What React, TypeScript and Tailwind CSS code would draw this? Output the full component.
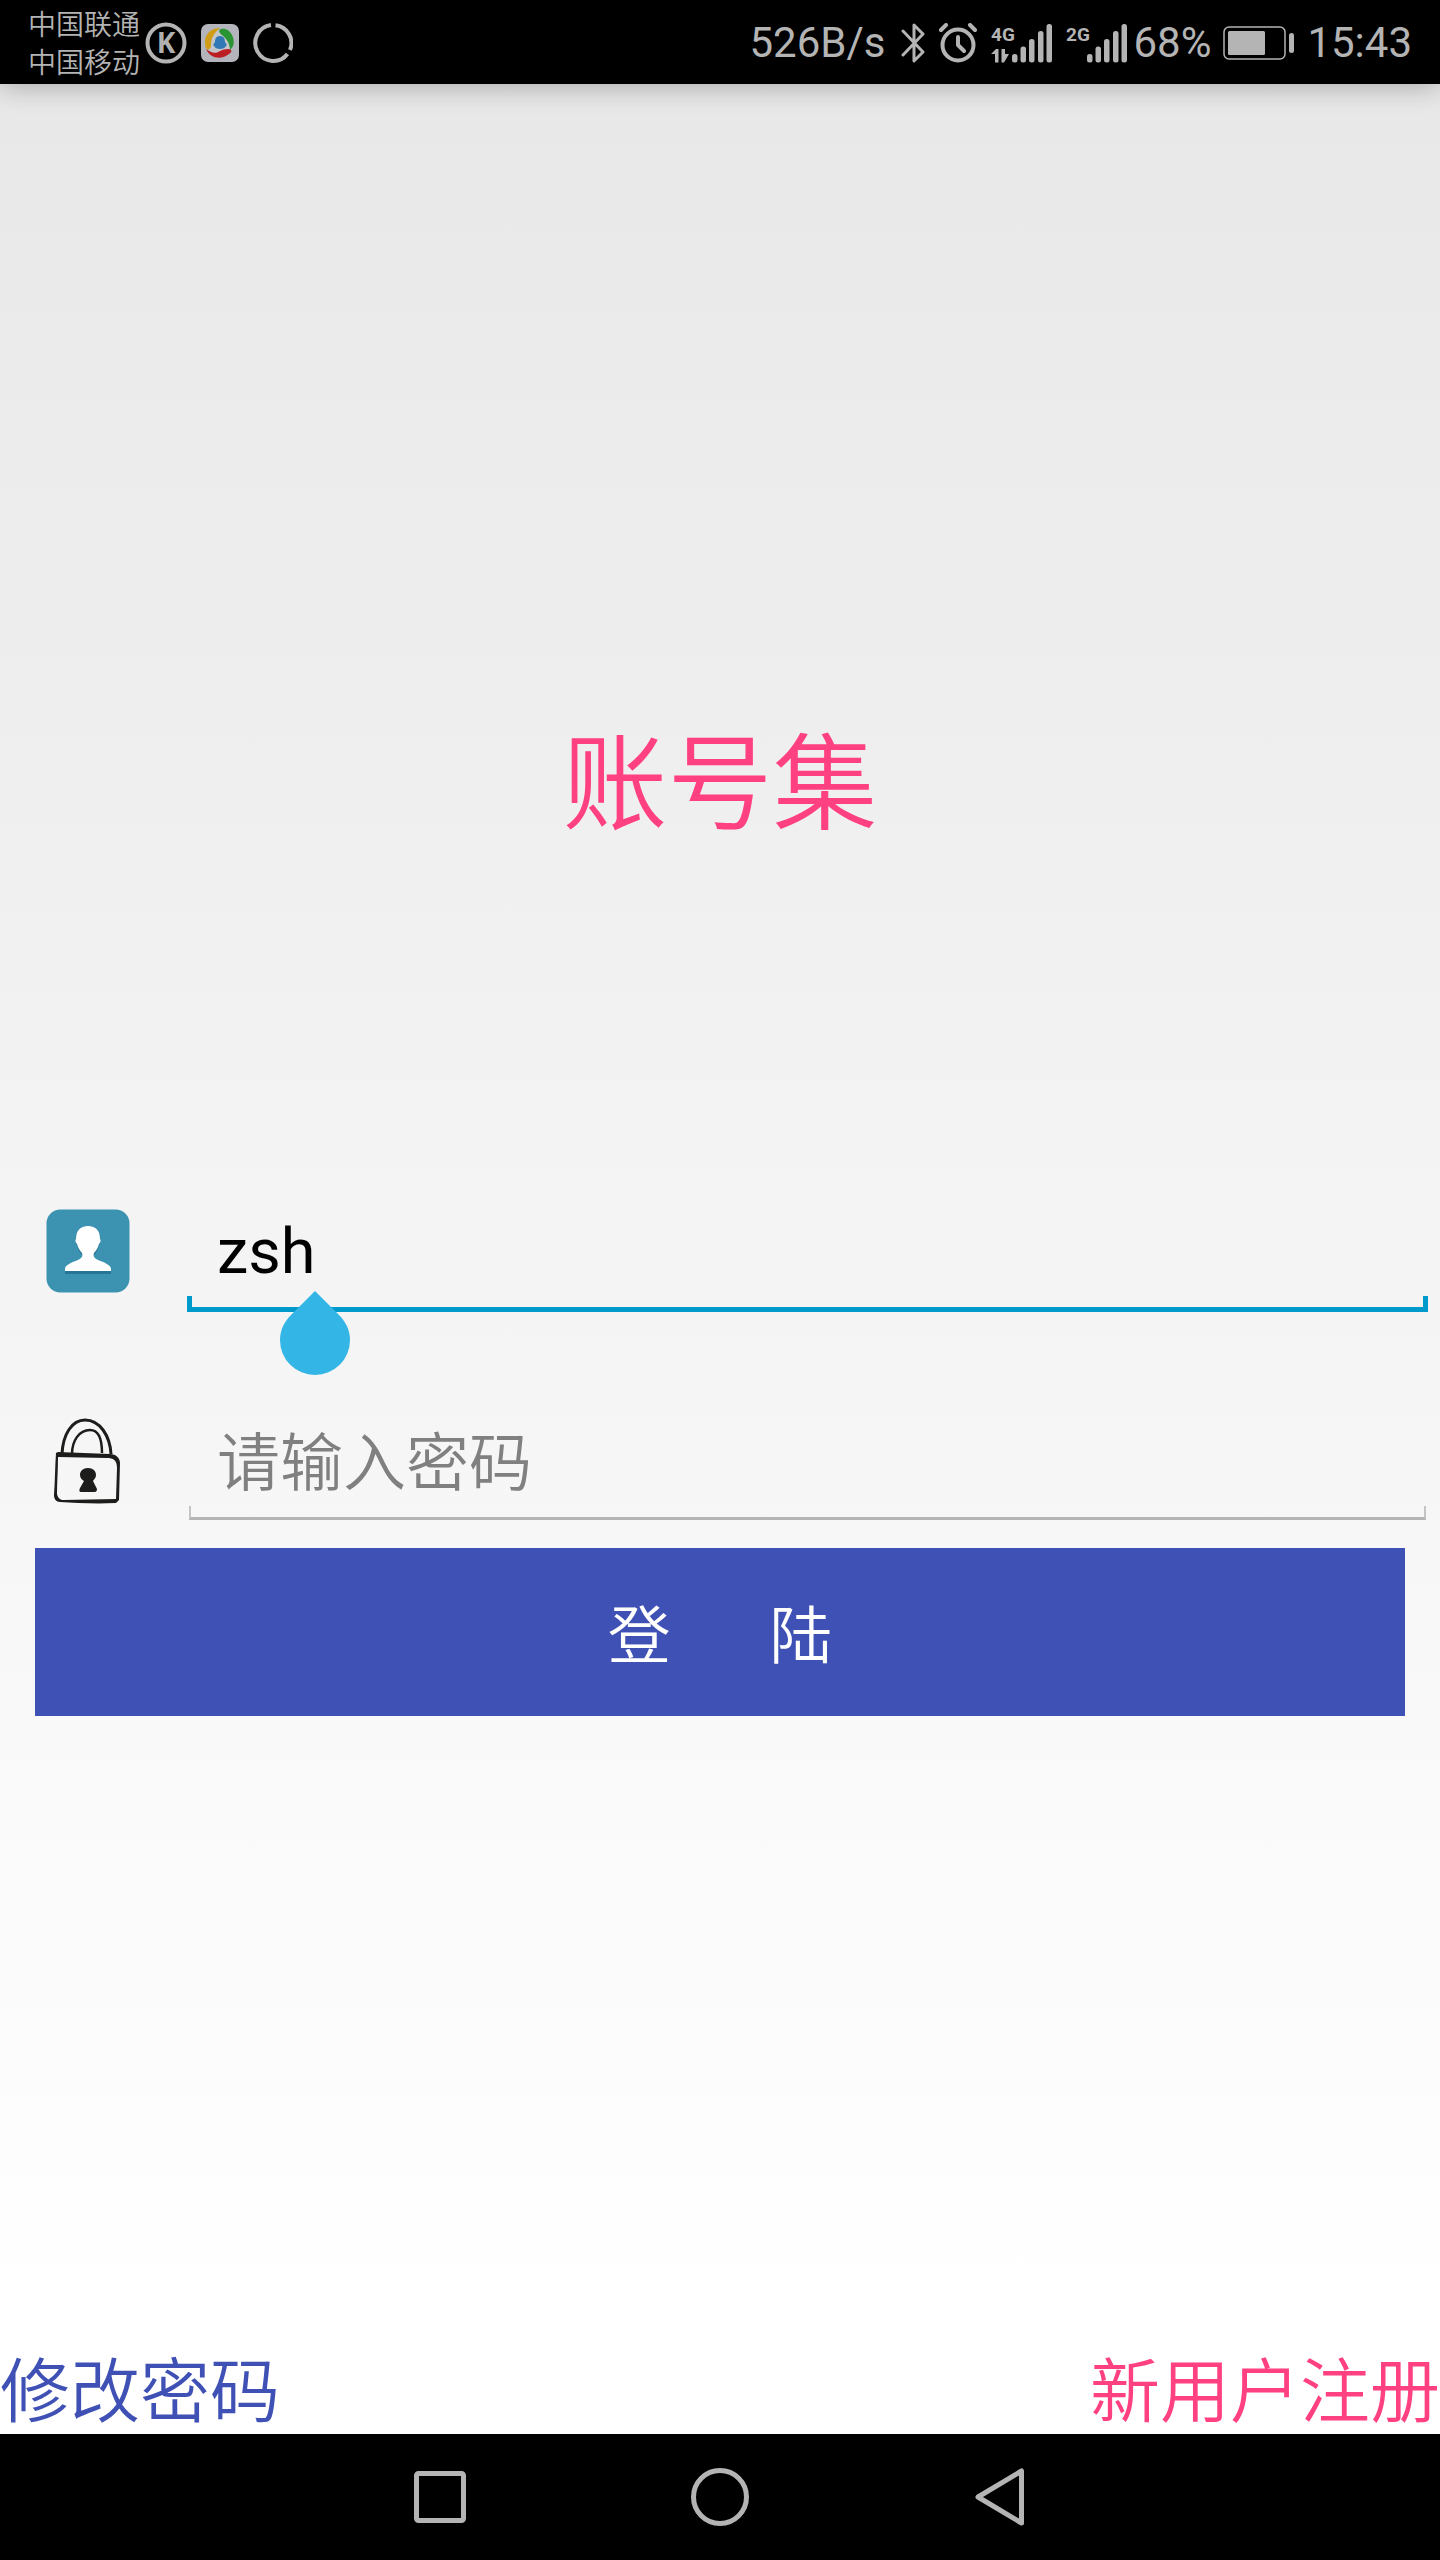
import { useState } from "react";

const cjk = "font-['Roboto','Noto_Sans_CJK_SC',sans-serif]";

function KIcon() {
  return (
    <svg className="ml-[5px] h-[42px] w-[42px]" viewBox="0 0 42 42" aria-hidden="true">
      <circle cx="21" cy="21" r="18.5" fill="none" stroke="#b4b4b4" strokeWidth="4" />
      <text x="21" y="31" textAnchor="middle" fontFamily="Open Sans, sans-serif" fontSize="28" fontWeight="700" fill="#b0b0b0">
        K
      </text>
    </svg>
  );
}

function AppIcon() {
  return (
    <svg className="ml-3.5 h-[38px] w-[38px]" viewBox="0 0 38 38" aria-hidden="true">
      <rect width="38" height="38" rx="7" fill="#b3b4bc" />
      <circle cx="19" cy="19" r="13" fill="#c4c6ca" />
      <path d="M19 4C10 4 4 10 4 18c0 3 0 6 2 7 3 1 4-1 4-4 0-7 3-12 9-17z" fill="#cf9d18" />
      <path d="M20 5c5-1 9 2 11 6 3 6 2 12-2 15 0-6-3-11-8-15-3-2-4-5-1-6z" fill="#2a9434" />
      <path d="M5 25c5 4 10 5 14 2 4-2 9-3 11-1 1 1 0 3-2 4C21 36 9 35 5 25z" fill="#bb1f24" />
      <path d="M19 12c4 0 5 3 5 6 2 2 2 4 1 4-1 2-3 3-6 3s-5-1-6-3c-1 0-1-2 1-4 0-3 1-6 5-6z" fill="#3179b6" />
    </svg>
  );
}

function RingIcon() {
  return (
    <svg className="ml-3.5 h-10 w-10" viewBox="0 0 40 40" fill="none" stroke="#b4b4b4" strokeWidth="4" aria-hidden="true">
      <path d="M22.5 2.2A18 18 0 0 1 37 27" />
      <path d="M34.500 31A18 18 0 1 1 18 2.100" />
    </svg>
  );
}

function Signal({ label, data }: { label: string; data?: boolean }) {
  return (
    <svg className="h-10 w-[61px]" viewBox="0 0 61 40" fill="#b4b4b4" role="img" aria-label={label + " signal"}>
      <text x="0" y="18" fontFamily="Roboto, sans-serif" fontSize="19" fontWeight="700">
        {label}
      </text>
      {data && <path d="M0 31l5-5h2.500v13.500H4V31zM10.500 26H14v5l4 0-5 8.500h-2.500z" />}
      <rect x="21" y="31" width="5.500" height="8.500" rx="2.500" />
      <rect x="29.500" y="23.500" width="5.500" height="16" rx="2.500" />
      <rect x="38" y="16" width="5.500" height="23.500" rx="2.500" />
      <rect x="47" y="8" width="5.500" height="31.500" rx="2.500" />
      <rect x="55.500" y="1" width="5.500" height="38.500" rx="2.500" />
    </svg>
  );
}

function StatusBar() {
  return (
    <header className="relative z-10 flex h-[84px] items-center bg-black pt-0.5 pr-7 pl-7 text-[#b4b4b4] shadow-[0_4px_24px_rgba(0,0,0,0.25)]">
      <div className={`${cjk} pt-1 text-[28px] leading-[38px] font-[350]`}>
        <p>中国联通</p>
        <p>中国移动</p>
      </div>
      <KIcon />
      <AppIcon />
      <RingIcon />
      <div className="ml-auto flex items-center gap-3.5 font-['Roboto',sans-serif] text-[42px] leading-[50px]">
        <span className="mr-0.5">526B/s</span>
        <svg className="h-10 w-6" viewBox="0 0 24 40" fill="none" stroke="#b4b4b4" strokeWidth="3" strokeLinejoin="round" strokeLinecap="round" role="img" aria-label="Bluetooth">
          <path d="M2 8l20 21-9 9V2l9 9L2 32" />
        </svg>
        <svg className="h-10 w-[38px]" viewBox="0 0 38 40" fill="none" stroke="#b4b4b4" strokeWidth="4" strokeLinecap="round" strokeLinejoin="round" role="img" aria-label="Alarm">
          <circle cx="19" cy="22" r="15.500" />
          <path d="M19 14v8l6 6M2 7l5-5M36 7l-5-5" />
        </svg>
        <Signal label="4G" data />
        <Signal label="2G" />
        <span className="-mr-0.5 -ml-2">68%</span>
        <svg className="-mr-0.5 h-9 w-[72px]" viewBox="0 0 72 36" role="img" aria-label="Battery">
          <rect x="1" y="2" width="61" height="32" rx="5" fill="none" stroke="#b4b4b4" strokeWidth="1.500" />
          <rect x="5" y="6" width="37" height="24" rx="1.500" fill="#b4b4b4" />
          <rect x="66" y="8" width="5" height="20" rx="2.500" fill="#b4b4b4" />
        </svg>
        <span>15:43</span>
      </div>
    </header>
  );
}

function UserIcon() {
  return (
    <svg className="h-[84px] w-[84px]" viewBox="0 0 84 84" aria-hidden="true">
      <rect x="0.500" y="0.500" width="83" height="83" rx="14" fill="#3c92b1" />
      <path d="M19 65v-5c2-4 8-6 13-8 4-2 5-4 4-6-3-3-4-6-5-10-2-2-2-4-1-6 0-8 4-13 12-13s12 5 12 13c1 2 1 4-1 6-1 4-2 7-5 10-1 2 0 4 4 6 5 2 11 4 13 8v5z" fill="#267594" />
      <path d="M19 62v-3c2-4 8-6 13-8 4-2 5-4 4-7-3-3-4-6-5-9-2-2-2-4-1-5 0-8 4-13 12-13s12 5 12 13c1 1 1 3-1 5-1 3-2 6-5 9-1 3 0 5 4 7 5 2 11 4 13 8v3z" fill="#fff" />
    </svg>
  );
}

function LockIcon() {
  return (
    <svg className="h-[86px] w-[68px]" viewBox="0 0 68 86" fill="none" stroke="#1d1d1b" aria-hidden="true">
      <path d="M8 36C9 16 18 2 31 2c15 0 25 16 26 34" strokeWidth="3" />
      <path d="M18 36c0-13 7-24 18-24 9 0 12 9 12 23" strokeWidth="2.500" />
      <path fill="#1d1d1b" stroke="none" fillRule="evenodd" d="M2 35l2-1 52 2c6 0 10 4 10 9l-1 37-3 3c-20 1-40 0-56-1-4 0-6-3-6-7 1-14 1-28 2-42zM4 39c0 13-1 25-1 37 1 4 3 6 7 6l52-1 1-31c0-8-4-10-10-10z" />
      <path fill="#1d1d1b" stroke="none" d="M34 50c5 0 8 3 8 7 0 3-2 4-3 6l4 8c0 2-1 3-2 3H27c-2 0-2-2-1-4l4-7c-2-1-4-3-4-6 0-4 3-7 8-7z" />
    </svg>
  );
}

export default function App() {
  const [name, setName] = useState("zsh");
  const [password, setPassword] = useState("");

  return (
    <div className={`${cjk} flex min-h-screen flex-col`}>
      <StatusBar />
      <main className="flex flex-1 flex-col bg-linear-to-b from-[#e8e8e8] to-white to-95%">
        <h1 className="mt-[625px] text-center text-[105px] leading-[154px] font-[350] text-[#ff4081]">账号集</h1>
        <form className="mt-[346px]" onSubmit={(e) => e.preventDefault()}>
          <div className="flex items-start">
            <label htmlFor="name" className="flex w-[175px] shrink-0 justify-center" aria-label="用户名">
              <UserIcon />
            </label>
            <div className="relative mr-3 ml-3 flex-1">
              <input
                id="name"
                value={name}
                onChange={(e) => setName(e.target.value)}
                className="block h-[87px] w-full bg-transparent px-[30px] text-[63px] text-black outline-none"
              />
              <div className="h-4 border-x-[5px] border-b-[5px] border-[#0099cc]" />
              <svg className="absolute top-[82px] left-[93px] h-[84px] w-[70px]" viewBox="0 0 70 84" aria-hidden="true">
                <path d="M35 0l20 20c10 9 15 18 15 29a35 35 0 0 1-70 0c0-11 5-20 15-29z" fill="#33b5e5" />
              </svg>
            </div>
          </div>
          <div className="mt-[106px] flex items-start">
            <label htmlFor="password" className="flex w-[175px] shrink-0 justify-center" aria-label="密码">
              <LockIcon />
            </label>
            <div className="mr-3 ml-3 flex-1">
              <input
                id="password"
                type="password"
                placeholder="请输入密码"
                value={password}
                onChange={(e) => setPassword(e.target.value)}
                className="block h-[88px] w-full bg-transparent px-[30px] pt-1 text-[63px] font-[350] text-black outline-none placeholder:text-[#808080]"
              />
              <div className="mx-0.5 h-3.5 border-x-2 border-b-[3px] border-x-[#c4c4c4] border-b-[#b4b4b4]" />
            </div>
          </div>
          <div className="mt-7 px-[35px]">
            <button type="submit" className="h-[168px] w-full bg-[#3f51b5] pb-0.5 font-['Noto_Sans_CJK_SC',sans-serif] text-[63px] font-[350] whitespace-pre text-white">
              {"登       陆"}
            </button>
          </div>
        </form>
        <div className="mt-auto flex items-end justify-between text-[70px] leading-[82px] font-[350]">
          <a href="#password" className="text-[#3f51b5]">修改密码</a>
          <a href="#register" className="text-[#ff4081]">新用户注册</a>
        </div>
      </main>
      <nav className="flex h-[126px] items-center justify-center gap-[220px] bg-black">
        <button type="button" aria-label="Recent apps">
          <svg className="h-[60px] w-[60px]" viewBox="0 0 60 60" fill="none" stroke="#b4b4b4" strokeWidth="5">
            <rect x="6.500" y="6.500" width="47" height="47" rx="2" />
          </svg>
        </button>
        <button type="button" aria-label="Home">
          <svg className="h-[60px] w-[60px]" viewBox="0 0 60 60" fill="none" stroke="#b4b4b4" strokeWidth="5">
            <circle cx="30" cy="30" r="26.500" />
          </svg>
        </button>
        <button type="button" aria-label="Back">
          <svg className="h-[60px] w-[60px]" viewBox="0 0 60 60" fill="none" stroke="#b4b4b4" strokeWidth="5" strokeLinejoin="round">
            <path d="M51.500 4v52L8 30z" />
          </svg>
        </button>
      </nav>
    </div>
  );
}
